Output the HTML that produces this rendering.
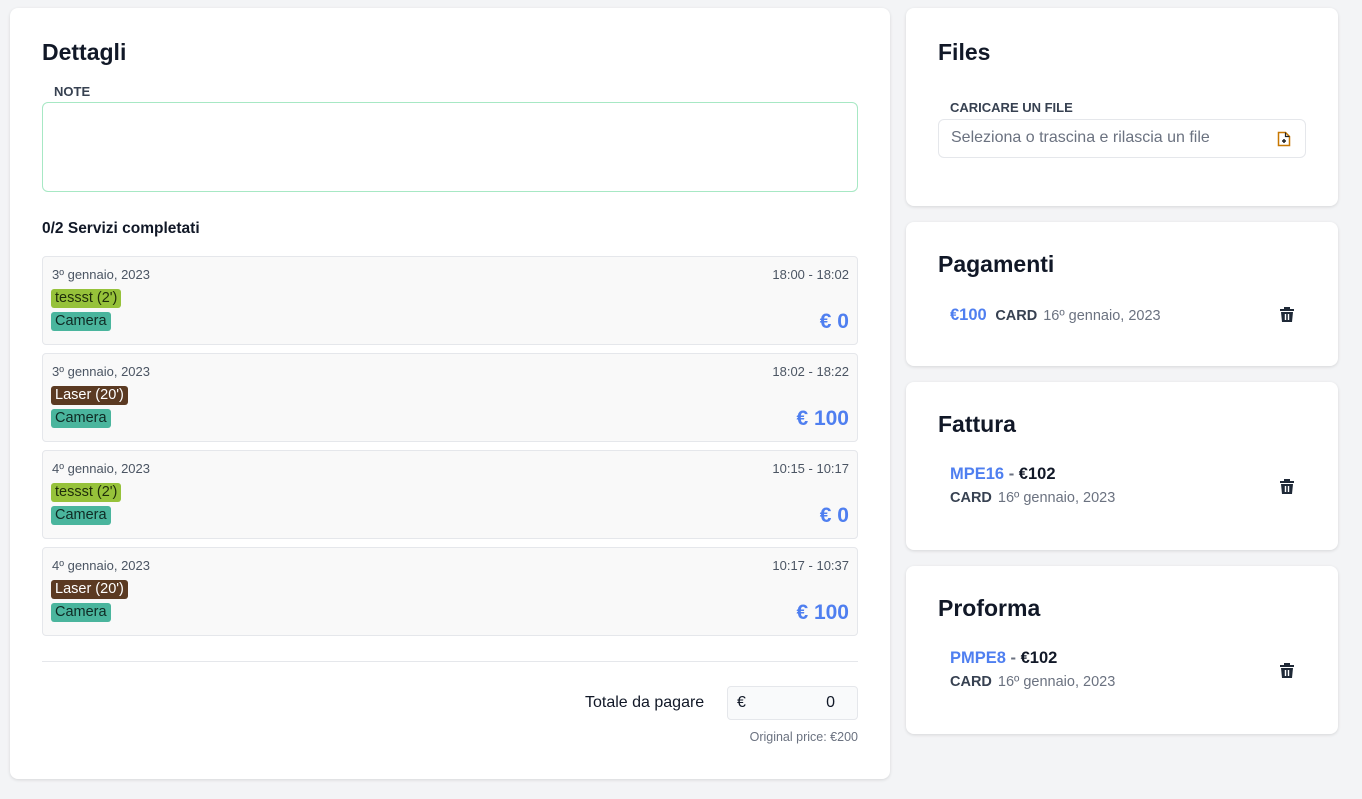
<!DOCTYPE html>
<html><head><meta charset="utf-8"><style>
*{box-sizing:border-box;margin:0;padding:0}
body{width:1362px;height:799px;background:#f3f4f6;font-family:"Liberation Sans",sans-serif;color:#111827;position:relative;overflow:hidden}
.card{position:absolute;background:#fff;border-radius:8px;box-shadow:0 1px 3px rgba(0,0,0,.12)}
h2{font-size:23px;font-weight:700;position:absolute;color:#111827}
.lbl{position:absolute;font-size:13px;font-weight:700;color:#374151}
.svc{position:absolute;left:32px;width:816px;height:89px;background:#f9f9f9;border:1px solid #e5e7eb;border-radius:4px}
.svc .d{position:absolute;left:9px;top:10px;font-size:13px;color:#4b5563}
.svc .t{position:absolute;right:8px;top:10px;font-size:13px;color:#4b5563}
.tag{position:absolute;left:8px;font-size:14.5px;padding:1px 4px;border-radius:3px;line-height:17px}
.g{background:#96c23a;color:#1f2d0a;top:32px}
.b{background:#5b3a22;color:#fff;top:32px}
.c{background:#4ab59d;color:#0f2a24;top:55px}
.svc .p{position:absolute;right:8px;top:53px;font-size:21px;font-weight:700;color:#4f7ff0}
.trash{position:absolute;width:38px;height:38px;border-radius:6px}
.trash svg{position:absolute;left:12px;top:11px}
.blue{color:#4f7ff0;font-weight:700}
.sm{font-size:14.5px;color:#6b7280}
.sm b{color:#374151;margin-right:6px}
</style></head><body>
<div class="card" style="left:10px;top:8px;width:880px;height:771px">
<h2 style="left:32px;top:31px">Dettagli</h2>
<div class="lbl" style="left:44px;top:76px">NOTE</div>
<div style="position:absolute;left:32px;top:94px;width:816px;height:90px;border:1px solid #a7e8c4;border-radius:6px"></div>
<div style="position:absolute;left:32px;top:212px;font-size:15.5px;font-weight:700">0/2 Servizi completati</div>
<div class="svc" style="top:248px"><span class="d">3º gennaio, 2023</span><span class="t">18:00 - 18:02</span><span class="tag g">tessst (2')</span><span class="tag c">Camera</span><span class="p">€ 0</span></div>
<div class="svc" style="top:345px"><span class="d">3º gennaio, 2023</span><span class="t">18:02 - 18:22</span><span class="tag b">Laser (20')</span><span class="tag c">Camera</span><span class="p">€ 100</span></div>
<div class="svc" style="top:442px"><span class="d">4º gennaio, 2023</span><span class="t">10:15 - 10:17</span><span class="tag g">tessst (2')</span><span class="tag c">Camera</span><span class="p">€ 0</span></div>
<div class="svc" style="top:539px"><span class="d">4º gennaio, 2023</span><span class="t">10:17 - 10:37</span><span class="tag b">Laser (20')</span><span class="tag c">Camera</span><span class="p">€ 100</span></div>
<div style="position:absolute;left:32px;top:653px;width:816px;border-top:1px solid #e5e7eb"></div>
<div style="position:absolute;left:575px;top:686px;font-size:16px">Totale da pagare</div>
<div style="position:absolute;left:717px;top:678px;width:131px;height:34px;border:1px solid #e5e7eb;border-radius:4px;background:#f9fafb;font-size:16px;padding:7px 9px">€<span style="float:right;margin-right:13px">0</span></div>
<div style="position:absolute;right:32px;top:722px;font-size:12.5px;color:#6b7280">Original price: €200</div>
</div>

<div class="card" style="left:906px;top:8px;width:432px;height:198px">
<h2 style="left:32px;top:31px">Files</h2>
<div class="lbl" style="left:44px;top:92px">CARICARE UN FILE</div>
<div style="position:absolute;left:32px;top:111px;width:368px;height:39px;border:1px solid #e5e7eb;border-radius:6px;font-size:16px;color:#6b7280;padding:9px 12px">Seleziona o trascina e rilascia un file
<svg style="position:absolute;right:14px;top:11px" width="14" height="16" viewBox="0 0 14 16"><path d="M1.5 1.5h7l4 4v9h-11z" fill="#fff" stroke="#c77700" stroke-width="1.5"/><path d="M8.5 1.5v4h4" fill="none" stroke="#222" stroke-width="1.2"/><path d="M7 8v4M5 10h4" stroke="#222" stroke-width="1.5"/></svg></div>
</div>

<div class="card" style="left:906px;top:222px;width:432px;height:144px">
<h2 style="left:32px;top:29px">Pagamenti</h2>
<div style="position:absolute;left:44px;top:84px;font-size:16.5px"><span class="blue">€100</span> <span class="sm"><b style="margin-left:4px">CARD</b>16º gennaio, 2023</span></div>
<div class="trash" style="left:362px;top:73px"><svg width="14" height="16" viewBox="0 0 14 16"><path d="M4 1h6v2h4v2H0V3h4z M1 6h12l-1 10H2z" fill="#1f2937"/><path d="M5.5 8v6M8.5 8v6" stroke="#fff" stroke-width="1.4"/></svg></div>
</div>

<div class="card" style="left:906px;top:382px;width:432px;height:168px">
<h2 style="left:32px;top:29px">Fattura</h2>
<div style="position:absolute;left:44px;top:83px;font-size:16.5px;font-weight:700"><span class="blue">MPE16</span> <span style="color:#6b7280">-</span> €102</div>
<div class="sm" style="position:absolute;left:44px;top:108px"><b>CARD</b>16º gennaio, 2023</div>
<div class="trash" style="left:362px;top:85px"><svg width="14" height="16" viewBox="0 0 14 16"><path d="M4 1h6v2h4v2H0V3h4z M1 6h12l-1 10H2z" fill="#1f2937"/><path d="M5.5 8v6M8.5 8v6" stroke="#fff" stroke-width="1.4"/></svg></div>
</div>

<div class="card" style="left:906px;top:566px;width:432px;height:168px">
<h2 style="left:32px;top:29px">Proforma</h2>
<div style="position:absolute;left:44px;top:83px;font-size:16.5px;font-weight:700"><span class="blue">PMPE8</span> <span style="color:#6b7280">-</span> €102</div>
<div class="sm" style="position:absolute;left:44px;top:108px"><b>CARD</b>16º gennaio, 2023</div>
<div class="trash" style="left:362px;top:85px"><svg width="14" height="16" viewBox="0 0 14 16"><path d="M4 1h6v2h4v2H0V3h4z M1 6h12l-1 10H2z" fill="#1f2937"/><path d="M5.5 8v6M8.5 8v6" stroke="#fff" stroke-width="1.4"/></svg></div>
</div>
</body></html>
